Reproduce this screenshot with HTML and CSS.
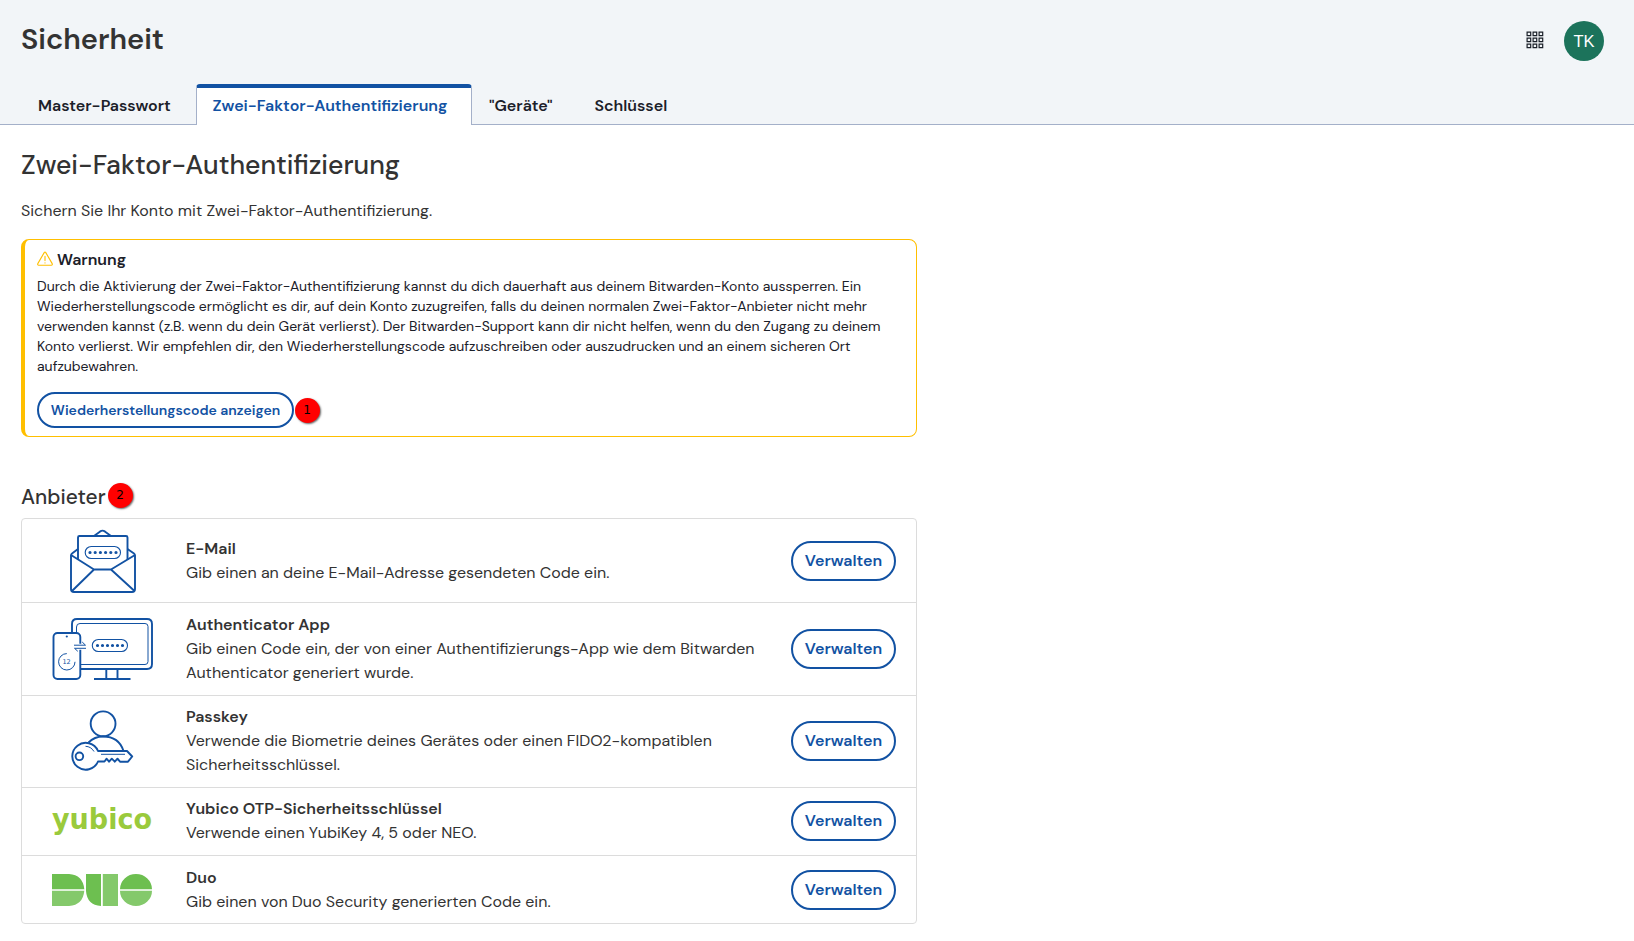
FILE: index.html
```
<!DOCTYPE html>
<html lang="de">
<head>
<meta charset="utf-8">
<title>Sicherheit</title>
<link rel="stylesheet" href="styles.css">
</head>
<body>
<header class="header">
  <div class="titlebar">
    <h1 class="title">Sicherheit</h1>
    <div class="tools">
      <svg class="grid-icon" width="18" height="18" viewBox="0 0 18 18"><g fill="none" stroke="#1b2029" stroke-width="1.2"><path d="M1.1 1.1h3.6v3.6h-3.6zM7.1 1.1h3.6v3.6h-3.6zM13.1 1.1h3.6v3.6h-3.6zM1.1 7.1h3.6v3.6h-3.6zM7.1 7.1h3.6v3.6h-3.6zM13.1 7.1h3.6v3.6h-3.6zM1.1 13.1h3.6v3.6h-3.6zM7.1 13.1h3.6v3.6h-3.6zM13.1 13.1h3.6v3.6h-3.6z"/></g></svg>
      <div class="avatar">TK</div>
    </div>
  </div>
  <nav class="tabs">
    <a class="tab tab-master">Master-Passwort</a>
    <a class="tab active">Zwei-Faktor-Authentifizierung</a>
    <a class="tab tab-devices">"Geräte"</a>
    <a class="tab tab-keys">Schlüssel</a>
  </nav>
</header>
<main class="main">
  <h2 class="heading">Zwei-Faktor-Authentifizierung</h2>
  <p class="intro">Sichern Sie Ihr Konto mit Zwei-Faktor-Authentifizierung.</p>
  <section class="callout">
    <div class="callout-title">
      <svg width="16" height="16" viewBox="0 0 16 16"><g fill="none" stroke="#ffbf00" stroke-width="1.1" stroke-linecap="round" stroke-linejoin="round"><path d="M7.2 1.600q.8-1.200 1.600 0l6.400 11q.5 1.400-.9 1.600H1.700q-1.400-.2-.9-1.600zM8 5.200v4.400M8 11.700v.2"/></g></svg>
      <span>Warnung</span>
    </div>
    <p class="callout-text">Durch die Aktivierung der Zwei-Faktor-Authentifizierung kannst du dich dauerhaft aus deinem Bitwarden-Konto aussperren. Ein Wiederherstellungscode ermöglicht es dir, auf dein Konto zuzugreifen, falls du deinen normalen Zwei-Faktor-Anbieter nicht mehr verwenden kannst (z.B. wenn du dein Gerät verlierst). Der Bitwarden-Support kann dir nicht helfen, wenn du den Zugang zu deinem Konto verlierst. Wir empfehlen dir, den Wiederherstellungscode aufzuschreiben oder auszudrucken und an einem sicheren Ort aufzubewahren.</p>
    <div class="callout-action">
      <button class="button small">Wiederherstellungscode anzeigen</button>
      <span class="badge">1</span>
    </div>
  </section>
  <div class="providers-head"><h3 class="subheading">Anbieter</h3><span class="badge">2</span></div>
  <ul class="providers">
    <li class="row row-mail">
      <svg class="logo" width="104" height="68" viewBox="50 527 104 68"><g fill="none" stroke="#1252a3" stroke-width="1.900" stroke-linejoin="round"><path d="M78 549l-6 4.500q-1 .7-1 2V589q0 3 3 3h58q3 0 3-3v-33.500q0-1.300-1-2l-6.500-4.500"/><path d="M78 560v-22.500q0-1.500 1.500-1.500h46.500q1.500 0 1.500 1.500V560"/><path d="M94 536l6.200-4.600q2.300-1.600 4.600 0L111 536M71 555l23 14.500h17L135 555M94 569.500L72 591M111 569.500l23.500 21.500"/><rect x="85.200" y="546.500" width="35.300" height="12" rx="6" stroke-width="1.100"/></g><path d="M90 552.500h27" fill="none" stroke="#1252a3" stroke-width="3.200" stroke-linecap="round" stroke-dasharray="0 5.200"/></svg>
      <div class="info"><strong>E-Mail</strong><span>Gib einen an deine E-Mail-Adresse gesendeten Code ein.</span></div>
      <button class="button">Verwalten</button>
    </li>
    <li class="row row-app">
      <svg class="logo" width="104" height="68" viewBox="50 615 104 68"><g fill="none" stroke="#1252a3" stroke-width="1.900"><path d="M72 632v-8q0-5 5-5h70q5 0 5 5v40q0 5-5 5H81M106.300 669v10M117.500 669v10M94 679h36.500"/><rect x="53.500" y="633" width="26.800" height="46" rx="4"/><path d="M76.500 632v-5q0-3.500 3.500-3.500h65q3 0 3 3v35q0 3-3 3H81" stroke-width="1"/><rect x="92.300" y="639.500" width="35.200" height="12" rx="6" stroke-width="1.100"/><path d="M66.800 653.600a8.200 8.200 0 1 0 8.200 8.200" stroke-width="1"/><path d="M74 645.200h11.500M86 648.300H74.500" stroke="#fff" stroke-width="3"/><path d="M74 645.200h11.500l-3.300-3.200M86 648.300H74.500l3.300 3" stroke-width="1"/></g><circle cx="66.800" cy="636.500" r="1.100" fill="#1252a3"/><path d="M97.500 645.500h26" fill="none" stroke="#1252a3" stroke-width="3.200" stroke-linecap="round" stroke-dasharray="0 5"/><text class="timer" x="66.600" y="664">12</text></svg>
      <div class="info"><strong>Authenticator App</strong><span>Gib einen Code ein, der von einer Authentifizierungs-App wie dem Bitwarden Authenticator generiert wurde.</span></div>
      <button class="button">Verwalten</button>
    </li>
    <li class="row row-passkey">
      <svg class="logo" width="104" height="68" viewBox="50 707 104 68"><g fill="none" stroke="#1252a3" stroke-width="1.900" stroke-linejoin="round"><circle cx="103.100" cy="723.800" r="12.400"/><path d="M88.500 742.500Q94.500 736.500 103 736.500q16 0 20.500 14.500"/><path d="M98 751h29l5.200 5.500-4.200 5.200h-8l-2.500-3-2.700 3-3-3-2.700 3-2.600-3-2 2.800H98A13.400 13.400 0 1 1 98 751z"/><circle cx="79.400" cy="756.300" r="3.800"/><path d="M101 754.300h24M85.500 746.300q5.500.2 8.500 5.200" stroke-width="1"/></g></svg>
      <div class="info"><strong>Passkey</strong><span>Verwende die Biometrie deines Gerätes oder einen FIDO2-kompatiblen Sicherheitsschlüssel.</span></div>
      <button class="button">Verwalten</button>
    </li>
    <li class="row row-yubico">
      <svg class="logo" width="104" height="56" viewBox="50 792 104 56"><text class="yubico" x="52" y="828" textLength="100" lengthAdjust="spacingAndGlyphs">yubico</text></svg>
      <div class="info"><strong>Yubico OTP-Sicherheitsschlüssel</strong><span>Verwende einen YubiKey 4, 5 oder NEO.</span></div>
      <button class="button">Verwalten</button>
    </li>
    <li class="row row-duo">
      <svg class="logo" width="104" height="48" viewBox="50 866 104 48"><path fill="#6dbf50" d="M52 874h17q14 1 15.300 15.200H52zM86 874h15v32q-14-1-15-15zM120 889.200a16 15.200 0 0 1 32 0z"/><path fill="#84c96b" d="M52 890.800h32.300Q83 905 69 906H52zM102.800 874H118v32h-15.200zM120 890.800a16 15.200 0 0 0 32 0z"/></svg>
      <div class="info"><strong>Duo</strong><span>Gib einen von Duo Security generierten Code ein.</span></div>
      <button class="button">Verwalten</button>
    </li>
  </ul>
</main>
</body>
</html>
```
FILE: styles.css
```
* { box-sizing: border-box; }
body { margin: 0; background: #fff; color: #333; font-family: "DM Sans", Inter, sans-serif; font-size: 16px; line-height: 24px; }
h1, h2, h3, p, ul { margin: 0; padding: 0; }
.header { height: 125px; background: #f2f5f8; border-bottom: 1px solid #a4b0c9; display: flex; flex-direction: column; justify-content: space-between; }
.titlebar { display: flex; justify-content: space-between; align-items: flex-start; padding: 21px 30px 0 21px; }
.title { font-size: 29px; font-weight: 600; line-height: 36px; }
.tools { display: flex; align-items: center; gap: 20px; }
.grid-icon { display: block; margin-top: -2px; }
.avatar { width: 40px; height: 40px; border-radius: 50%; background: #1c735b; color: #fff; text-align: center; font: 16.500px/40px "Liberation Sans", Arial, sans-serif; }
.tabs { display: flex; height: 41px; margin-bottom: -1px; padding-left: 21px; font-weight: 600; color: #1b2029; }
.tab { display: flex; align-items: center; padding: 3px 0 0; white-space: nowrap; }
.tab-master { width: 175px; padding-left: 17px; }
.tab.active { width: 276px; padding: 0 0 1px 15.500px; background: #fff; color: #1252a3; border: 1px solid #a4b0c9; border-top: 4px solid #1252a3; border-bottom: 0; border-radius: 4px 4px 0 0; }
.tab-devices { width: 122.500px; padding-left: 17px; }
.main { width: 896px; margin-left: 21px; }
.heading { padding-top: 22px; font-size: 26.600px; line-height: 36px; font-weight: 500; }
.intro { padding-top: 16px; }
.callout { height: 198px; margin-top: 16px; padding: 8px 12px 0; border: 1px solid #ffbf00; border-left-width: 4px; border-radius: 8px; color: #1b2029; }
.callout-title { display: flex; align-items: center; gap: 4px; font-weight: 600; }
.callout-title svg { margin-top: -2px; }
.callout-text { padding-top: 4px; font-size: 14px; line-height: 20px; }
.callout-action { display: flex; align-items: center; gap: .5px; margin-top: 16px; }
.button { flex: none; display: flex; align-items: center; justify-content: center; width: 105px; height: 40px; padding: 0; border: 2px solid #1252a3; border-radius: 20px; background: #fff; color: #1252a3; font: 600 16px/24px "DM Sans", Inter, sans-serif; }
.button.small { width: 257px; height: 36px; font-size: 14px; }
.badge { width: 25px; height: 25px; border-radius: 50%; background: #f00; color: #000; text-align: center; font: 12px/25px "DejaVu Sans", sans-serif; box-shadow: 1px 1px 2px rgba(0, 0, 0, .6); }
.providers-head { display: flex; align-items: center; gap: 2px; height: 28px; margin-top: 45px; }
.providers-head .badge { margin-top: -2px; }
.subheading { padding-top: 2px; font-size: 20.800px; font-weight: 500; line-height: 28px; }
.providers { margin-top: 8px; height: 406px; border: 1px solid #dcdcdc; border-radius: 4px; list-style: none; }
.row { display: flex; align-items: center; padding: 0 20px 0 28px; border-bottom: 1px solid #dcdcdc; }
.row:last-child { border-bottom: 0; }
.row-mail { height: 84px; }
.row-app { height: 93px; }
.row-passkey { height: 92px; padding-bottom: 1px; }
.row-yubico, .row-duo { height: 68px; }
.row-yubico { padding-bottom: 1px; }
.logo { flex: none; display: block; }
.info { display: flex; flex: 1; flex-direction: column; align-items: flex-start; padding: 0 32px; }
strong { font-weight: 600; }
.timer { font: 6.500px "DejaVu Sans", sans-serif; fill: #1252a3; text-anchor: middle; }
.yubico { font: bold 29px "DejaVu Sans", sans-serif; fill: #9aca3c; }
```
